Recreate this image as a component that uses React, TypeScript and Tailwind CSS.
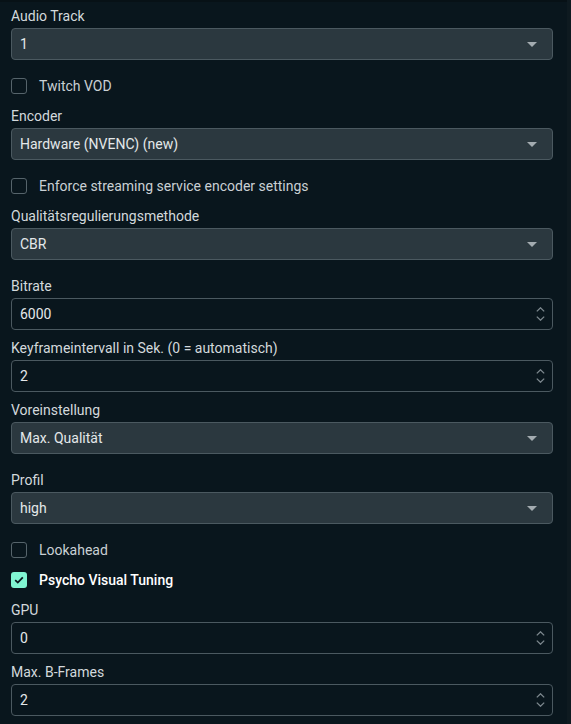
import React from "react";

const labelCls = "block text-[14px] leading-5 text-[#d3d9dc] mb-[2px]";

function Caret() {
  return (
    <svg width="10" height="5" viewBox="0 0 10 5" className="shrink-0">
      <path d="M0 0 H10 L5 5 Z" fill="#a3abb0" />
    </svg>
  );
}

function Spinner() {
  return (
    <div className="flex flex-col items-center gap-[4px] shrink-0">
      <svg width="9" height="5" viewBox="0 0 9 5">
        <path d="M0.8 4.4 L4.5 0.8 L8.2 4.4" fill="none" stroke="#7d888e" strokeWidth="1.3" />
      </svg>
      <svg width="9" height="5" viewBox="0 0 9 5">
        <path d="M0.8 0.6 L4.5 4.2 L8.2 0.6" fill="none" stroke="#7d888e" strokeWidth="1.3" />
      </svg>
    </div>
  );
}

function SelectField({ label, value }: { label: string; value: string }) {
  return (
    <div className="mb-4">
      <div className={labelCls}>{label}</div>
      <div className="h-8 rounded-[4px] border border-[#4b5960] bg-[#2b383f] flex items-center justify-between pl-[8px] pr-[15px]">
        <span className="text-[14px] text-[#e4e8ea]">{value}</span>
        <Caret />
      </div>
    </div>
  );
}

function NumberField({ label, value }: { label: string; value: string }) {
  return (
    <div className="mb-2">
      <div className={labelCls}>{label}</div>
      <div className="h-8 rounded-[4px] border border-[#4b5960] bg-[#09161d] flex items-center justify-between pl-[8px] pr-[7px]">
        <span className="text-[14px] text-[#e4e8ea]">{value}</span>
        <Spinner />
      </div>
    </div>
  );
}

function CheckRow({ label, checked = false }: { label: string; checked?: boolean }) {
  return (
    <div className="h-5 mb-[10px] flex items-center gap-3">
      {checked ? (
        <div className="w-4 h-4 rounded-[3px] bg-[#80f5d2] flex items-center justify-center">
          <svg width="10" height="8" viewBox="0 0 10 8">
            <path d="M1.2 4.1 L3.8 6.6 L8.8 1.4" fill="none" stroke="#09161d" strokeWidth="1.8" />
          </svg>
        </div>
      ) : (
        <div className="w-4 h-4 rounded-[3px] border border-[#56646b]" />
      )}
      <span
        className={
          checked
            ? "text-[14px] font-medium text-white"
            : "text-[14px] text-[#c9d0d4]"
        }
      >
        {label}
      </span>
    </div>
  );
}

export default function App() {
  return (
    <div className="flex w-[571px] h-[724px] bg-[#09161d] font-['Roboto',sans-serif] overflow-hidden">
      <div className="flex-1 flex flex-col border-t-2 border-[#071116] pl-[11px] pr-[14px] pt-[4px]">
        <SelectField label="Audio Track" value="1" />
        <CheckRow label="Twitch VOD" />
        <SelectField label="Encoder" value="Hardware (NVENC) (new)" />
        <CheckRow label="Enforce streaming service encoder settings" />
        <SelectField label="Qualitätsregulierungsmethode" value="CBR" />
        <NumberField label="Bitrate" value="6000" />
        <NumberField label="Keyframeintervall in Sek. (0 = automatisch)" value="2" />
        <SelectField label="Voreinstellung" value="Max. Qualität" />
        <SelectField label="Profil" value="high" />
        <CheckRow label="Lookahead" />
        <CheckRow label="Psycho Visual Tuning" checked />
        <NumberField label="GPU" value="0" />
        <NumberField label="Max. B-Frames" value="2" />
      </div>
      <div className="w-[4px] bg-[#0e1a20]" />
    </div>
  );
}
